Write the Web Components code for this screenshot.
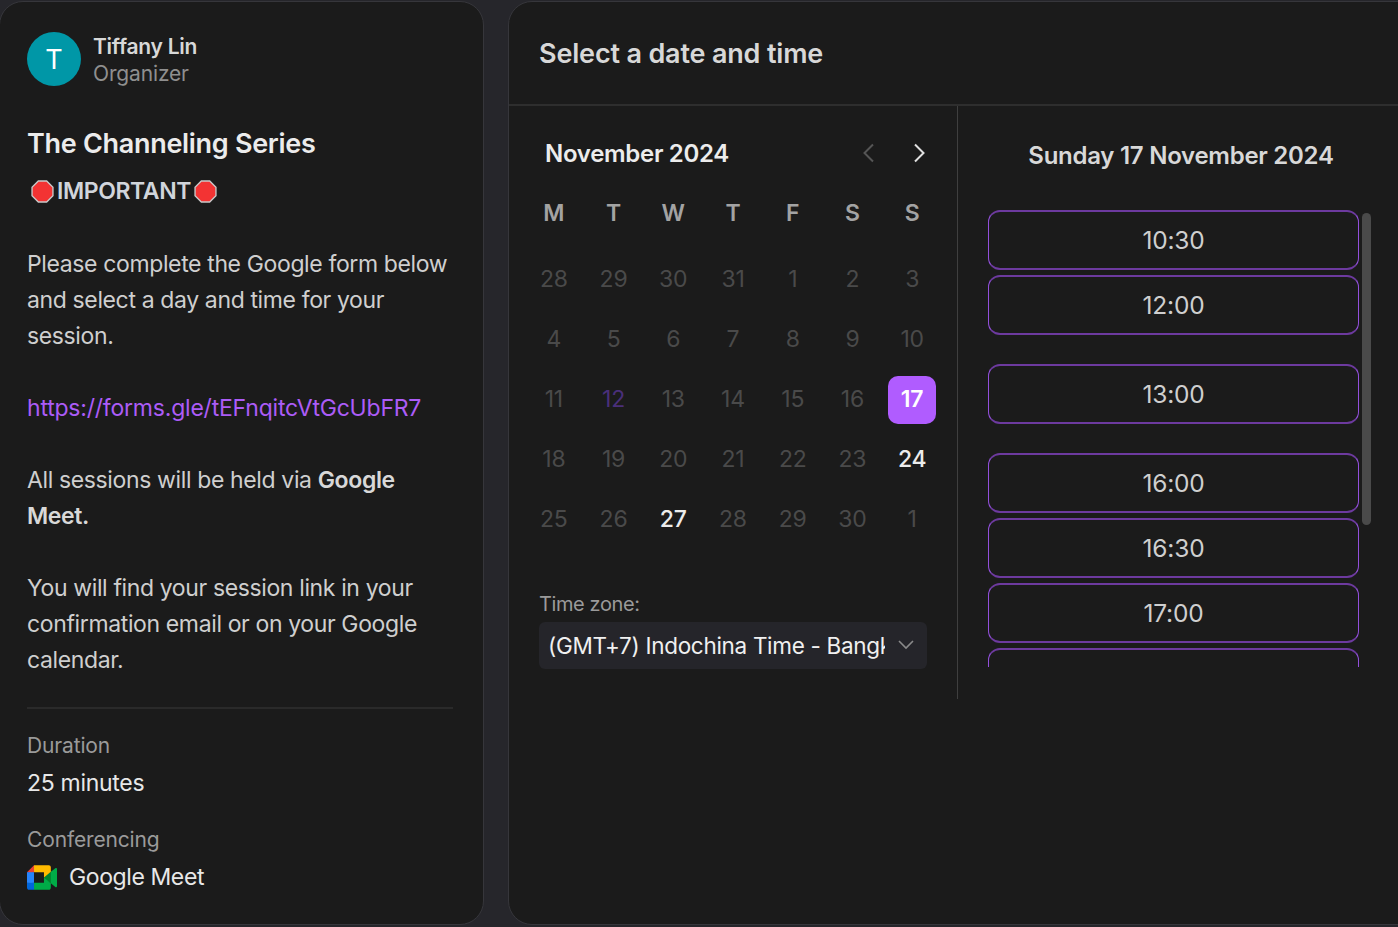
<!DOCTYPE html>
<html>
<head>
<meta charset="utf-8">
<title>Select a date and time</title>
<style>
    html, body { margin: 0; height: 100%; overflow: hidden; background: #26262b; }
    body { font-family: Inter, "Liberation Sans", sans-serif; color: #d4d4d4; }
    #page { display: flex; gap: 24px; height: 925px; width: 1440px; margin-left: -1px; padding-top: 1px; }
</style>
</head>
<body>
<div id="page">
    <event-panel>
        <b slot="where">Meet.</b>
    </event-panel>
    <booking-panel></booking-panel>
</div>

<script>
const stopSign = `<svg class="stop" viewBox="0 0 22 22" role="img" aria-label="stop sign"><path fill="#f33333" stroke="#c9c9c9" stroke-width="1.3" d="M7 1h8l6 6v8l-6 6H7l-6-6V7z"/></svg>`;

class EventPanel extends HTMLElement {
    constructor() {
        super();
        this.attachShadow({ mode: 'open' });
    }

    connectedCallback() {
        this.shadowRoot.innerHTML = `
            <style>
                :host { display: block; box-sizing: border-box; width: 485px; height: 924px; padding: 31px 30px 0 27px; background: #1b1b1b; border: 1px solid #36363b; border-radius: 24px; }
                .organizer { display: flex; align-items: center; gap: 12px; height: 54px; }
                .avatar { width: 54px; height: 54px; margin-top: -2px; border-radius: 50%; background: #0097a7; color: #fff; font-size: 27px; display: flex; align-items: center; justify-content: center; }
                .who { margin-top: -1px; }
                .name { font-size: 21px; line-height: 27px; font-weight: 600; color: #d8d8d8; letter-spacing: -0.25px; }
                .role { font-size: 21px; line-height: 27px; color: #8f8f8f; letter-spacing: -0.15px; }
                h1 { margin: 39px 0 12px; font-size: 27px; line-height: 36px; font-weight: 600; color: #ececec; letter-spacing: -0.3px; }
                .desc { font-size: 23px; line-height: 36px; color: #cfcfcf; letter-spacing: -0.37px; }
                .important { box-sizing: border-box; display: flex; align-items: center; gap: 3px; padding: 0 0 2px 4px; height: 36px; margin: 0 0 36px; font-weight: 600; color: #d1d5db; letter-spacing: -0.4px; }
                .stop { width: 23px; height: 23px; flex: none; }
                p { margin: 0 0 36px; }
                a { color: #ac5cf7; text-decoration: none; letter-spacing: -0.21px; }
                b, ::slotted(b) { font-weight: 600; color: #d8d8d8; }
                hr { border: 0; border-top: 2px solid #2a2a2a; margin: 29px 0 0; }
                .label { font-size: 21px; line-height: 27px; color: #9a9a9a; letter-spacing: -0.15px; }
                .value { font-size: 23px; line-height: 36px; color: #e8e8e8; letter-spacing: -0.3px; }
                .duration { margin-top: 23px; }
                .duration .value { margin-top: 6px; }
                .conf { margin-top: 25px; }
                .meet { display: flex; align-items: center; gap: 12px; margin-top: 6px; letter-spacing: -0.4px; }
                .meet svg { width: 30px; height: 25px; flex: none; }
            </style>
            <div class="organizer">
                <div class="avatar">T</div>
                <div class="who">
                    <div class="name">Tiffany Lin</div>
                    <div class="role">Organizer</div>
                </div>
            </div>
            <h1>The Channeling Series</h1>
            <div class="desc">
                <div class="important">${stopSign}IMPORTANT${stopSign}</div>
                <p>Please complete the Google form below and select a day and time for your session.</p>
                <p><a href="#">https://forms.gle/tEFnqitcVtGcUbFR7</a></p>
                <p>All sessions will be held via <b>Google</b> <slot name="where"></slot></p>
                <p style="margin:0">You will find your session link in your confirmation email or on your Google calendar.</p>
            </div>
            <hr>
            <div class="duration">
                <div class="label">Duration</div>
                <div class="value">25 minutes</div>
            </div>
            <div class="conf">
                <div class="label">Conferencing</div>
                <div class="value meet">
                    <svg viewBox="0 0 87.5 72">
                        <path fill="#00832d" d="M49.5 36l8.53 9.75 11.47 7.33 2-17.02-2-16.64-11.69 6.44z"/>
                        <path fill="#0066da" d="M0 51.5V66c0 3.315 2.685 6 6 6h14.5l3-10.96-3-9.54-9.95-3z"/>
                        <path fill="#e94235" d="M20.5 0L0 20.5l10.55 3 9.95-3 2.95-9.41z"/>
                        <path fill="#2684fc" d="M20.5 20.5H0v31h20.5z"/>
                        <path fill="#00ac47" d="M82.6 8.68L69.5 19.42v33.66l13.16 10.79c1.97 1.54 4.85.135 4.85-2.37V11c0-2.535-2.945-3.925-4.91-2.32zM49.5 36v15.5h-29V72h43c3.315 0 6-2.685 6-6V53.08z"/>
                        <path fill="#ffba00" d="M63.5 0h-43v20.5h29V36l20-16.57V6c0-3.315-2.685-6-6-6z"/>
                    </svg>
                    Google Meet
                </div>
            </div>
        `;
    }
}

class BookingPanel extends HTMLElement {
    constructor() {
        super();
        this.attachShadow({ mode: 'open' });
    }

    connectedCallback() {
        this.shadowRoot.innerHTML = `
            <style>
                :host { display: block; box-sizing: border-box; width: 931px; height: 924px; background: #1b1b1b; border: 1px solid #36363b; border-radius: 24px; }
                header { box-sizing: border-box; height: 104px; padding: 0 30px; display: flex; align-items: center; border-bottom: 2px solid #2e2e2e; }
                h2 { margin: 0; font-size: 27px; font-weight: 600; color: #d8d8d8; letter-spacing: -0.17px; }
                .body { display: flex; height: 593px; }
                .left { box-sizing: border-box; width: 449px; padding-left: 15px; border-right: 1px solid #3f3f3f; }
            </style>
            <header><h2>Select a date and time</h2></header>
            <div class="body">
                <div class="left">
                    <month-calendar></month-calendar>
                    <tz-select></tz-select>
                </div>
                <slot-list></slot-list>
            </div>
        `;
    }
}

class MonthCalendar extends HTMLElement {
    constructor() {
        super();
        this.attachShadow({ mode: 'open' });
    }

    connectedCallback() {
        const head = ['M', 'T', 'W', 'T', 'F', 'S', 'S'].map(d => `<div class="dow">${d}</div>`).join('');
        // day, kind
        const days = [
            28, 29, 30, 31, 1, 2, 3,
            4, 5, 6, 7, 8, 9, 10,
            11, '12p', 13, 14, 15, 16, '17s',
            18, 19, 20, 21, 22, 23, '24a',
            25, 26, '27a', 28, 29, 30, 1
        ].map(d => {
            const s = String(d);
            const cls = s.endsWith('p') ? 'past' : s.endsWith('s') ? 'sel' : s.endsWith('a') ? 'avail' : '';
            return `<div class="day ${cls}"><span>${parseInt(s)}</span></div>`;
        }).join('');
        this.shadowRoot.innerHTML = `
            <style>
                :host { display: block; width: 418px; }
                .top { display: flex; align-items: center; height: 32px; padding: 31px 0 0 21px; }
                .title { flex: 1; font-size: 24px; font-weight: 600; color: #ececec; letter-spacing: -0.3px; }
                .arrows { display: flex; gap: 34px; margin-right: 15px; }
                .arrows svg { width: 16px; height: 24px; fill: none; stroke-width: 2; display: block; }
                .grid { display: grid; grid-template-columns: repeat(7, 1fr); margin-top: 15px; }
                .dow { box-sizing: border-box; height: 60px; padding-bottom: 2px; display: flex; align-items: center; justify-content: center; font-size: 23px; font-weight: 600; color: #a3a3a3; margin-bottom: 6px; }
                .day { height: 60px; display: flex; align-items: center; justify-content: center; font-size: 23px; color: #4a4a4a; letter-spacing: -0.2px; }
                .day span { box-sizing: border-box; width: 48px; height: 48px; padding-bottom: 2px; display: flex; align-items: center; justify-content: center; border-radius: 10px; }
                .past { color: #4a2f7a; }
                .avail { color: #ececec; font-weight: 500; }
                .sel span { background: #b05cff; color: #fff; font-weight: 600; }
            </style>
            <div class="top">
                <div class="title">November 2024</div>
                <div class="arrows">
                    <svg viewBox="0 0 16 24" stroke="#555"><path d="M12 3.5 3.5 12l8.5 8.5"/></svg>
                    <svg viewBox="0 0 16 24" stroke="#e0e0e0"><path d="m4 3.5 8.5 8.5L4 20.5"/></svg>
                </div>
            </div>
            <div class="grid">${head}${days}</div>
        `;
    }
}

class TzSelect extends HTMLElement {
    constructor() {
        super();
        this.attachShadow({ mode: 'open' });
    }

    connectedCallback() {
        this.shadowRoot.innerHTML = `
            <style>
                :host { display: block; width: 388px; margin: 41px 0 0 15px; }
                label { display: block; font-size: 20px; line-height: 27px; color: #9a9a9a; letter-spacing: -0.4px; margin-bottom: 4px; }
                .box { box-sizing: border-box; display: flex; align-items: center; height: 47px; padding: 0 12px 1px 9px; background: #25252a; border-radius: 6px; }
                .val { flex: 1; overflow: hidden; white-space: nowrap; font-size: 22.5px; color: #f0f0f0; letter-spacing: -0.3px; margin-right: 12px; }
                svg { width: 18px; height: 12px; fill: none; stroke: #8a8a8a; stroke-width: 1.6; }
            </style>
            <label>Time zone:</label>
            <div class="box">
                <div class="val">(GMT+7) Indochina Time - Bangkok</div>
                <svg viewBox="0 0 18 12"><path d="m2 2 7 7 7-7"/></svg>
            </div>
        `;
    }
}

class SlotList extends HTMLElement {
    constructor() {
        super();
        this.attachShadow({ mode: 'open' });
    }

    connectedCallback() {
        const slots = [
            ['10:30', 0], ['12:00', 0], ['13:00', 1], ['16:00', 1], ['16:30', 0], ['17:00', 0], ['', 0]
        ].map(([t, gap]) => `<div class="slot${gap ? ' gap' : ''}">${t}</div>`).join('');
        this.shadowRoot.innerHTML = `
            <style>
                :host { display: block; width: 420px; padding: 0 0 0 30px; }
                h3 { margin: 0 0 32px; padding-top: 34px; height: 38px; width: 386px; text-align: center; font-size: 24px; line-height: 32px; font-weight: 600; color: #d8d8d8; letter-spacing: -0.27px; }
                .wrap { display: flex; gap: 3px; height: 457px; }
                .list { width: 371px; height: 457px; overflow: hidden; flex: none; }
                .slot { box-sizing: border-box; height: 60px; margin-bottom: 5px; display: flex; align-items: center; justify-content: center; font-size: 24.5px; color: #cfcfcf; letter-spacing: -0.2px; border: solid #6d3a9f; border-width: 2px 1px; border-left-color: #9350dc; border-right-color: #9350dc; border-radius: 12px; }
                .gap { margin-top: 29px; }
                .thumb { width: 9px; height: 312px; margin-top: 3px; background: #4a4a4a; border-radius: 5px; }
            </style>
            <h3>Sunday 17 November 2024</h3>
            <div class="wrap">
                <div class="list">${slots}</div>
                <div class="thumb"></div>
            </div>
        `;
    }
}

customElements.define('event-panel', EventPanel);
customElements.define('booking-panel', BookingPanel);
customElements.define('month-calendar', MonthCalendar);
customElements.define('tz-select', TzSelect);
customElements.define('slot-list', SlotList);
</script>
</body>
</html>
